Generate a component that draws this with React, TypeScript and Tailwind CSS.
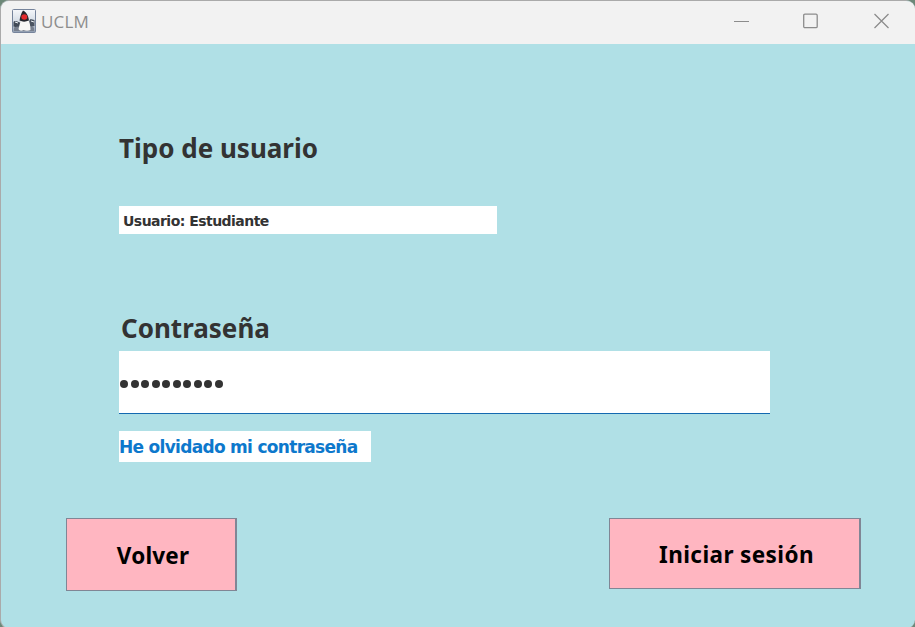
import type { ReactNode } from "react";

function DukeIcon() {
  return (
    <svg className="-mt-1" width="24" height="24" viewBox="0 0 24 24" aria-hidden="true">
      <defs>
        <linearGradient id="tile" x1="0" y1="0" x2="0" y2="1">
          <stop offset="0" stopColor="#f5f7fa" />
          <stop offset="0.55" stopColor="#d3dbe5" />
          <stop offset="1" stopColor="#8c9aad" />
        </linearGradient>
      </defs>
      <rect x="0.5" y="0.5" width="23" height="23" rx="1" fill="url(#tile)" stroke="#75839b" />
      <path d="M1.500 13c1-2 4-1 6 .5l3-2v6l-5 1-4-1z" fill="#414a57" />
      <path d="M22.500 11l-4-1-2 3 2 5 4-1z" fill="#4a5360" />
      <path d="M2 18.500c5-2 15-2 20 0v3.500H2z" fill="#777f8d" />
      <path d="M9 10L6.500 20c1 2 3 2 5 1 2 1 5 1 7 0 0-4-1-8-2-11z" fill="#f7f7f5" />
      <path d="M11 1.500C9 4 8.200 8 7.500 11.500c3 1.500 6 1.500 9.500 0-.5-4-2-8-6-10z" fill="#25272d" />
      <ellipse cx="12.300" cy="8" rx="3" ry="2.700" fill="#e32a2e" />
      <path d="M3 13l3 1M19 12l3 1" stroke="#edf1f4" strokeWidth="1" />
    </svg>
  );
}

function TitleBar() {
  return (
    <header className="flex h-[43px] shrink-0 items-center bg-[#f2f2f2] pl-[11px] pr-[25px] font-normal">
      <DukeIcon />
      <span className="-mt-0.5 ml-[5px] font-['Open_Sans',sans-serif] text-[17px] leading-6 tracking-[0.2px] text-[#8d8d8d]">UCLM</span>
      <div className="-mt-[3px] ml-auto flex items-center text-[#8c8c8c]">
        <svg width="16" height="16" viewBox="0 0 16 16" stroke="currentColor"><path d="M0 8.500h15" /></svg>
        <svg className="ml-[53px]" width="16" height="16" viewBox="0 0 16 16" fill="none" stroke="currentColor" strokeWidth="1.300"><rect x=".7" y="1.200" width="13.500" height="13.500" rx="1.200" /></svg>
        <svg className="ml-[55px]" width="16" height="16" viewBox="0 0 16 16" stroke="currentColor" strokeWidth="1.300"><path d="M.5 1l14 14M14.500 1L.5 15" /></svg>
      </div>
    </header>
  );
}

function ActionButton({ className, children }: { className: string; children: ReactNode }) {
  return (
    <button className={`flex items-center justify-center whitespace-nowrap border border-r-2 border-[#808695] bg-[#ffb6c1] pt-[2px] font-['Noto_Sans',sans-serif] text-[22.500px] font-bold text-black ${className}`}>
      {children}
    </button>
  );
}

export default function App() {
  return (
    <div className="h-[627px] w-[915px] overflow-hidden bg-[#6c8878]">
      <div className="flex h-[629px] w-[915px] flex-col overflow-hidden rounded-[9px] border border-r-0 border-[#aaaaaa] bg-[#b0e0e6] font-['DejaVu_Sans',sans-serif] font-bold text-[#333333]">
        <TitleBar />
        <main className="flex flex-1 flex-col">
          <h1 className="ml-[118px] mt-[88px] h-8 whitespace-nowrap font-['Noto_Sans',sans-serif] text-[26px] leading-8">Tipo de usuario</h1>
          <div className="ml-[118px] mt-[42px] flex h-7 w-[378px] items-center bg-white pl-1 pt-[2px] text-[14px] leading-[26px] tracking-[-0.530px]">Usuario: Estudiante</div>
          <label className="ml-[120px] mt-[78px] h-8 font-['Noto_Sans',sans-serif] text-[26px] leading-8">Contraseña</label>
          <div className="ml-[118px] mt-[7px] flex h-[63px] w-[651px] items-center border-b border-b-[#1469b0] bg-white">
            <span className="flex gap-[2.550px] pl-[1px] pt-[4px]">
              {Array.from({ length: 10 }, (_, index) => (
                <span key={index} className="size-2 rounded-full bg-[#333333]" />
              ))}
            </span>
          </div>
          <a className="ml-[118px] mt-[17px] flex h-[31px] w-[252px] items-center whitespace-nowrap bg-white pt-[2px] text-[17px] leading-[29px] tracking-[-0.700px] text-[#0d78cc]">He olvidado mi contraseña</a>
          <div className="ml-[65px] mr-[54px] mt-[56px] flex items-start justify-between">
            <ActionButton className="h-[73px] w-[171px] pl-[4px] tracking-[0.200px]">Volver</ActionButton>
            <ActionButton className="h-[71px] w-[252px] pl-[4px] tracking-[0.400px]">Iniciar sesión</ActionButton>
          </div>
        </main>
      </div>
    </div>
  );
}
